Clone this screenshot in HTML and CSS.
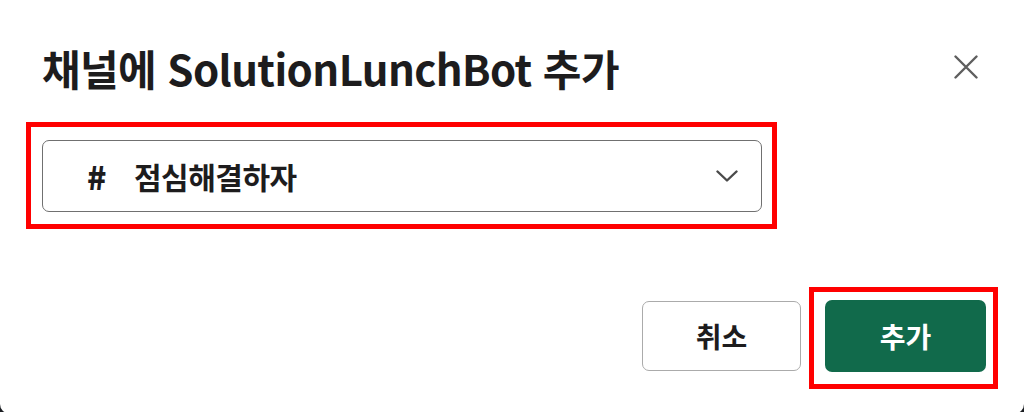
FILE: index.html
```html
<!DOCTYPE html>
<html lang="ko">
<head>
<meta charset="utf-8">
<link rel="stylesheet" href="styles.css">
</head>
<body>
<div class="dialog">
  <div class="header">
    <h1 class="title">채널에 SolutionLunchBot 추가</h1>
    <button class="close" aria-label="닫기">
      <svg width="24" height="24" viewBox="0 0 24 24"><path d="M1.5 1.5 L22.5 22.5 M22.5 1.5 L1.5 22.5" stroke="#5e5e5e" stroke-width="2.4" stroke-linecap="round" fill="none"/></svg>
    </button>
  </div>
  <div class="body">
    <div class="mark mark-select">
      <div class="select">
        <span class="hash">#</span>
        <span class="channel">점심해결하자</span>
        <svg class="chev" width="22" height="12" viewBox="0 0 22 12"><path d="M1.5 1.5 L11 10.5 L20.5 1.5" stroke="#4a4a4a" stroke-width="2.4" stroke-linecap="round" stroke-linejoin="round" fill="none"/></svg>
      </div>
    </div>
  </div>
  <div class="footer">
    <button class="btn btn-cancel">취소</button>
    <div class="mark mark-btn">
      <button class="btn btn-primary">추가</button>
    </div>
  </div>
</div>
</body>
</html>
```

FILE: styles.css
```css
* { box-sizing: border-box; }
html, body { margin: 0; padding: 0; }
body {
  background: #1a1d21;
  font-family: "Noto Sans CJK KR", "Noto Sans", sans-serif;
  color: #1d1c1d;
}
.dialog {
  width: 1024px;
  height: 414px;
  background: #fff;
  border-radius: 0 0 10px 10px;
  display: flex;
  flex-direction: column;
  overflow: hidden;
}
.header {
  display: flex;
  justify-content: space-between;
  align-items: flex-start;
  padding: 38px 46px 0 42px;
  height: 122px;
}
.title {
  margin: 0;
  font-size: 42px;
  font-weight: 700;
  line-height: 60px;
  letter-spacing: -0.6px;
}
.close {
  border: 0;
  background: none;
  padding: 0;
  margin-top: 17px;
  width: 24px;
  height: 24px;
  display: block;
}
.close svg { display: block; }
.body {
  padding-left: 26px;
}
.mark {
  border: 5px solid #ff0000;
}
.mark-select {
  width: 751px;
  height: 107px;
  padding: 13px 10px 12px 11px;
}
.select {
  height: 72px;
  border: 1.5px solid #707070;
  border-radius: 7px;
  display: flex;
  align-items: center;
  padding: 0 23px 0 44px;
}
.hash {
  font-size: 32px;
  font-weight: 900;
  width: 47px;
  line-height: 1;
}
.channel {
  font-size: 30px;
  font-weight: 700;
  flex: 1;
  letter-spacing: -0.5px;
}
.chev { display: block; }
.footer {
  display: flex;
  justify-content: flex-end;
  align-items: flex-start;
  padding: 58px 26px 0 0;
  gap: 8px;
}
.btn {
  font-family: "Noto Sans CJK KR", "Noto Sans", sans-serif;
  font-size: 28px;
  font-weight: 700;
  border-radius: 7px;
  cursor: pointer;
}
.btn-cancel {
  width: 159px;
  height: 70px;
  margin-top: 14px;
  background: #fff;
  border: 1.5px solid #ababab;
  color: #1d1c1d;
}
.mark-btn {
  width: 189px;
  height: 102px;
  padding: 8px 7px 12px 11px;
}
.btn-primary {
  width: 161px;
  height: 72px;
  background: #116a4b;
  border: 0;
  color: #fff;
}
```
